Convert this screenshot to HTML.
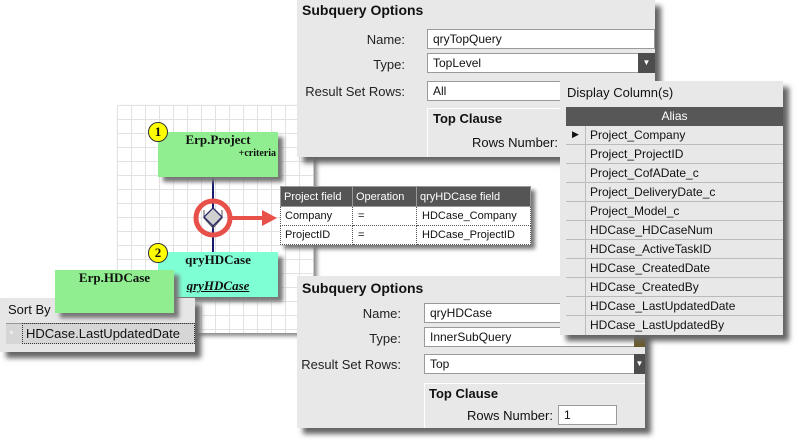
<!DOCTYPE html>
<html><head><style>
*{margin:0;padding:0;box-sizing:border-box}
body{width:799px;height:446px;background:#fff;position:relative;overflow:hidden;font-family:"Liberation Sans",sans-serif;font-size:12px;color:#111}
.a{position:absolute}
.grid{left:117px;top:105px;width:197px;height:228px;background-color:#fff;background-image:linear-gradient(#e2e2e2 1px,transparent 1px),linear-gradient(90deg,#e2e2e2 1px,transparent 1px);background-size:14px 14px;border-right:1px solid #ccc;box-shadow:3px 3px 4px #888}
.panel{background:#e8e8e8;box-shadow:6px 6px 5px #666}
.inp{background:#fff;border:1px solid #9a9a9a;height:20px;padding:2px 0 0 5px;font-size:12px}
.lbl{text-align:right;font-size:13px;color:#222}
.btn{background:#4d4d4d;color:#fff;font-size:8px;text-align:center;line-height:20px}
.node{font-family:"Liberation Serif",serif;font-weight:bold;box-shadow:5px 5px 4px #777;text-align:center}
.badge{width:20px;height:20px;border-radius:50%;background:#ff0;border:1px solid #333;font-family:"Liberation Serif",serif;font-weight:bold;font-size:13px;text-align:center;line-height:18px}
table{border-collapse:collapse}
</style></head><body>

<div class="a grid"></div>

<!-- top panel -->
<div class="a panel" style="left:297px;top:0;width:358px;height:157px">
 <div class="a" style="left:5px;top:2px;font-weight:bold;font-size:14px">Subquery Options</div>
 <div class="a lbl" style="left:0;top:32px;width:108px">Name:</div>
 <div class="a inp" style="left:130px;top:29px;width:228px">qryTopQuery</div>
 <div class="a lbl" style="left:0;top:57px;width:108px">Type:</div>
 <div class="a inp" style="left:130px;top:53px;width:228px">TopLevel</div>
 <div class="a btn" style="left:341px;top:53px;width:17px;height:20px">▼</div>
 <div class="a lbl" style="left:0;top:84px;width:108px">Result Set Rows:</div>
 <div class="a inp" style="left:130px;top:81px;width:140px">All</div>
 <div class="a" style="left:130px;top:108px;width:140px;height:49px;border-left:1px solid #fff;border-top:1px solid #fff">
  <div class="a" style="left:5px;top:2px;font-weight:bold;font-size:13px">Top Clause</div>
  <div class="a" style="left:44px;top:26px;font-size:13px">Rows Number:</div>
 </div>
</div>

<!-- bottom panel -->
<div class="a panel" style="left:297px;top:276px;width:348px;height:152px">
 <div class="a" style="left:5px;top:4px;font-weight:bold;font-size:14px">Subquery Options</div>
 <div class="a lbl" style="left:0;top:30px;width:104px">Name:</div>
 <div class="a inp" style="left:127px;top:27px;width:221px">qryHDCase</div>
 <div class="a lbl" style="left:0;top:55px;width:104px">Type:</div>
 <div class="a inp" style="left:127px;top:51px;width:221px">InnerSubQuery</div>
 <div class="a btn" style="left:337px;top:51px;width:11px;height:20px;background:#6b5a2a"></div>
 <div class="a lbl" style="left:0;top:81px;width:104px">Result Set Rows:</div>
 <div class="a inp" style="left:127px;top:78px;width:221px">Top</div>
 <div class="a btn" style="left:337px;top:78px;width:11px;height:20px">▼</div>
 <div class="a" style="left:127px;top:107px;width:221px;height:45px;border-left:1px solid #fff;border-top:1px solid #fff">
  <div class="a" style="left:4px;top:2px;font-weight:bold;font-size:13px">Top Clause</div>
  <div class="a" style="left:42px;top:24px;font-size:13px">Rows Number:</div>
  <div class="a inp" style="left:133px;top:21px;width:59px">1</div>
 </div>
</div>

<!-- display columns -->
<div class="a panel" style="left:560px;top:81px;width:223px;height:254px">
 <div class="a" style="left:7px;top:4px;font-size:13px">Display Column(s)</div>
 <div class="a" style="left:6px;top:26px;width:217px;height:19px;background:#575757;color:#fff;text-align:center;line-height:19px;font-size:12px">Alias</div>
 <div class="a" style="left:6px;top:45px;width:217px;font-size:12px">
  <div style="height:19px;border-bottom:1px solid #bbb;position:relative"><span class="a" style="left:6px;top:3px;font-size:9px">▶</span><span class="a" style="left:24px;top:2px">Project_Company</span></div>
  <div style="height:19px;border-bottom:1px solid #bbb;position:relative"><span class="a" style="left:24px;top:2px">Project_ProjectID</span></div>
  <div style="height:19px;border-bottom:1px solid #bbb;position:relative"><span class="a" style="left:24px;top:2px">Project_CofADate_c</span></div>
  <div style="height:19px;border-bottom:1px solid #bbb;position:relative"><span class="a" style="left:24px;top:2px">Project_DeliveryDate_c</span></div>
  <div style="height:19px;border-bottom:1px solid #bbb;position:relative"><span class="a" style="left:24px;top:2px">Project_Model_c</span></div>
  <div style="height:19px;border-bottom:1px solid #bbb;position:relative"><span class="a" style="left:24px;top:2px">HDCase_HDCaseNum</span></div>
  <div style="height:19px;border-bottom:1px solid #bbb;position:relative"><span class="a" style="left:24px;top:2px">HDCase_ActiveTaskID</span></div>
  <div style="height:19px;border-bottom:1px solid #bbb;position:relative"><span class="a" style="left:24px;top:2px">HDCase_CreatedDate</span></div>
  <div style="height:19px;border-bottom:1px solid #bbb;position:relative"><span class="a" style="left:24px;top:2px">HDCase_CreatedBy</span></div>
  <div style="height:19px;border-bottom:1px solid #bbb;position:relative"><span class="a" style="left:24px;top:2px">HDCase_LastUpdatedDate</span></div>
  <div style="height:19px;position:relative"><span class="a" style="left:24px;top:2px">HDCase_LastUpdatedBy</span></div>
  <div class="a" style="left:19px;top:0;width:1px;height:209px;background:#bbb"></div>
 </div>
</div>

<!-- connector -->
<svg class="a" style="left:150px;top:170px" width="140" height="90">
 <line x1="63" y1="7" x2="63" y2="85" stroke="#1a1a6e" stroke-width="2"/>
 <path d="M54 40 L54 48 L63 58 L72 48 L72 40" fill="none" stroke="#555" stroke-width="1"/>
 <path d="M63 38 L72 47 L63 56 L54 47Z" fill="#d0d0d0" stroke="#2a2a6a" stroke-width="1.3"/>
 <circle cx="63" cy="48" r="17" fill="none" stroke="#e8504a" stroke-width="5"/>
 <line x1="80" y1="48" x2="114" y2="48" stroke="#e8504a" stroke-width="4"/>
 <path d="M112 40 L127 48 L112 56Z" fill="#e8504a"/>
</svg>

<!-- join table -->
<table class="a" style="left:280px;top:186px;width:251px;font-size:11px;box-shadow:4px 4px 4px #777;background:#fff">
 <tr style="background:#555;color:#fff;height:20px"><td style="width:72px;padding-left:3px;border:1px solid #999">Project field</td><td style="width:64px;padding-left:3px;border:1px solid #999">Operation</td><td style="padding-left:3px;border:1px solid #999">qryHDCase field</td></tr>
 <tr style="height:19px"><td style="padding-left:4px;border:1px dotted #555">Company</td><td style="padding-left:5px;border:1px dotted #555">=</td><td style="padding-left:5px;border:1px dotted #555">HDCase_Company</td></tr>
 <tr style="height:19px"><td style="padding-left:4px;border:1px dotted #555">ProjectID</td><td style="padding-left:5px;border:1px dotted #555">=</td><td style="padding-left:5px;border:1px dotted #555">HDCase_ProjectID</td></tr>
</table>

<!-- nodes -->
<div class="a node" style="left:158px;top:132px;width:120px;height:45px;background:#90ee90">
 <div class="a" style="left:0;top:0;width:120px;font-size:13px">Erp.Project</div>
 <div class="a" style="right:2px;top:16px;font-size:10px">+criteria</div>
</div>
<div class="a badge" style="left:148px;top:122px">1</div>

<div class="a node" style="left:158px;top:252px;width:120px;height:45px;background:#7fffd4">
 <div class="a" style="left:0;top:0;width:120px;font-size:13px">qryHDCase</div>
 <div class="a" style="left:0;top:26px;width:120px;font-size:13px;font-style:italic;text-decoration:underline">qryHDCase</div>
</div>
<div class="a badge" style="left:148px;top:243px">2</div>

<!-- sort by -->
<div class="a" style="left:0;top:298px;width:195px;height:54px;background:#e6e6e6;box-shadow:6px 6px 5px #666">
 <div class="a" style="left:8px;top:4px;font-size:13px">Sort By</div>
 <div class="a" style="left:6px;top:25px;width:189px;height:21px;background:#d6d6d6;border-top:1px solid #999"></div>
 <div class="a" style="left:22px;top:25px;width:173px;height:21px;border:1px dotted #333;font-size:13px;padding:2px 0 0 3px">HDCase.LastUpdatedDate</div>
 <div class="a" style="left:8px;top:32px;font-size:7px;color:#eee">▼</div>
</div>
<div class="a node" style="left:55px;top:270px;width:119px;height:43px;background:#90ee90">
 <div class="a" style="left:0;top:0;width:119px;font-size:13px">Erp.HDCase</div>
</div>

</body></html>
